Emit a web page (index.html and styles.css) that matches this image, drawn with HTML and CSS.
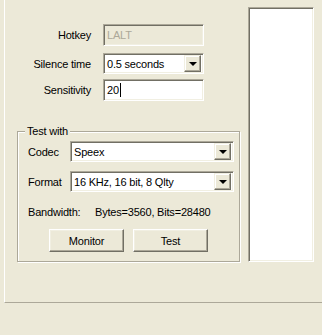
FILE: index.html
```html
<!DOCTYPE html>
<html lang="en">
<head>
    <meta charset="UTF-8">
    <title>Voice settings</title>
    <link rel="stylesheet" href="styles.css">
</head>
<body>
    <div class="panel">
        <div class="settings">
            <div class="row row-hotkey">
                <span class="label">Hotkey</span>
                <div class="field field-disabled">LALT</div>
            </div>
            <div class="row row-silence">
                <span class="label">Silence time</span>
                <div class="field combo">
                    <span class="combo-text">0.5 seconds</span>
                    <span class="drop"><span class="arrow"></span></span>
                </div>
            </div>
            <div class="row row-sens">
                <span class="label">Sensitivity</span>
                <div class="field">20<span class="caret"></span></div>
            </div>

            <div class="group">
                <span class="legend">Test with</span>
                <div class="grow grow-codec">
                    <span class="glabel">Codec</span>
                    <div class="field combo wide">
                        <span class="combo-text">Speex</span>
                        <span class="drop"><span class="arrow"></span></span>
                    </div>
                </div>
                <div class="grow grow-format">
                    <span class="glabel">Format</span>
                    <div class="field combo wide">
                        <span class="combo-text">16 KHz, 16 bit, 8 Qlty</span>
                        <span class="drop"><span class="arrow"></span></span>
                    </div>
                </div>
                <div class="bandwidth">
                    <span class="bw-label">Bandwidth:</span>
                    <span>Bytes=3560, Bits=28480</span>
                </div>
                <div class="buttons">
                    <button class="btn">Monitor</button>
                    <button class="btn">Test</button>
                </div>
            </div>
        </div>
        <div class="listbox"></div>
    </div>
</body>
</html>
```

FILE: styles.css
```css
body {
    margin: 0;
    background-color: #ece9d8;
    font-family: 'Liberation Sans', Arial, sans-serif;
    font-size: 11px;
    letter-spacing: -0.2px;
    color: #000;
}

.panel {
    margin-left: 4px;
    height: 302px;
    border-left: 1px solid #fff;
    border-bottom: 1px solid #aca899;
    box-shadow: 0 1px 0 #716f64;
    display: flex;
}

.settings {
    width: 243px;
    padding-top: 24px;
}

.row {
    display: flex;
    align-items: center;
}

.label {
    width: 86px;
    margin-right: 12px;
    text-align: right;
}

.row-silence {
    margin-top: 7px;
}

.row-sens {
    margin-top: 5px;
}

.field {
    box-sizing: border-box;
    width: 101px;
    height: 22px;
    padding: 0 3px;
    display: flex;
    align-items: center;
    background-color: #fff;
    border: 1px solid;
    border-color: #aca899 #fff #fff #aca899;
    box-shadow: inset 1px 1px 0 #716f64, inset -1px -1px 0 #f1efe2;
}

.field-disabled {
    background-color: #ece9d8;
    color: #aca899;
}

.combo {
    height: 21px;
    padding-right: 2px;
}

.combo-text {
    flex: 1;
}

.drop {
    box-sizing: border-box;
    width: 17px;
    height: 17px;
    display: flex;
    align-items: center;
    justify-content: center;
    background-color: #ece9d8;
    border: 1px solid;
    border-color: #f1efe2 #716f64 #716f64 #f1efe2;
    box-shadow: inset -1px -1px 0 #aca899, inset 1px 1px 0 #fff;
}

.arrow {
    width: 0;
    height: 0;
    margin-top: 1px;
    border-left: 4px solid transparent;
    border-right: 4px solid transparent;
    border-top: 4px solid #000;
}

.caret {
    display: inline-block;
    width: 1px;
    height: 14px;
    margin-left: 1px;
    background-color: #000;
}

.group {
    position: relative;
    box-sizing: border-box;
    width: 223px;
    height: 131px;
    margin: 30px 0 0 12px;
    padding: 9px 0 0 10px;
    border: 1px solid #aca899;
    box-shadow: 1px 1px 0 #fff, inset 1px 1px 0 #fff;
}

.legend {
    position: absolute;
    top: -7px;
    left: 7px;
    padding: 0 2px;
    background-color: #ece9d8;
}

.grow {
    display: flex;
    align-items: center;
}

.grow-format {
    margin-top: 9px;
}

.glabel {
    width: 42px;
}

.wide {
    width: 164px;
}

.bandwidth {
    margin-top: 14px;
    display: flex;
}

.bw-label {
    width: 67px;
}

.buttons {
    display: flex;
    gap: 9px;
    margin: 11px 0 0 21px;
}

.btn {
    box-sizing: border-box;
    width: 75px;
    height: 23px;
    padding: 0;
    font-family: inherit;
    font-size: 11px;
    letter-spacing: -0.2px;
    color: #000;
    background-color: #ece9d8;
    border: 1px solid;
    border-color: #fff #716f64 #716f64 #fff;
    box-shadow: inset -1px -1px 0 #aca899, inset 1px 1px 0 #f1efe2;
}

.listbox {
    box-sizing: border-box;
    width: 66px;
    height: 255px;
    margin-top: 7px;
    background-color: #fff;
    border: 1px solid;
    border-color: #aca899 #fff #fff #aca899;
    box-shadow: inset 1px 1px 0 #716f64, inset -1px -1px 0 #f1efe2;
}
```
